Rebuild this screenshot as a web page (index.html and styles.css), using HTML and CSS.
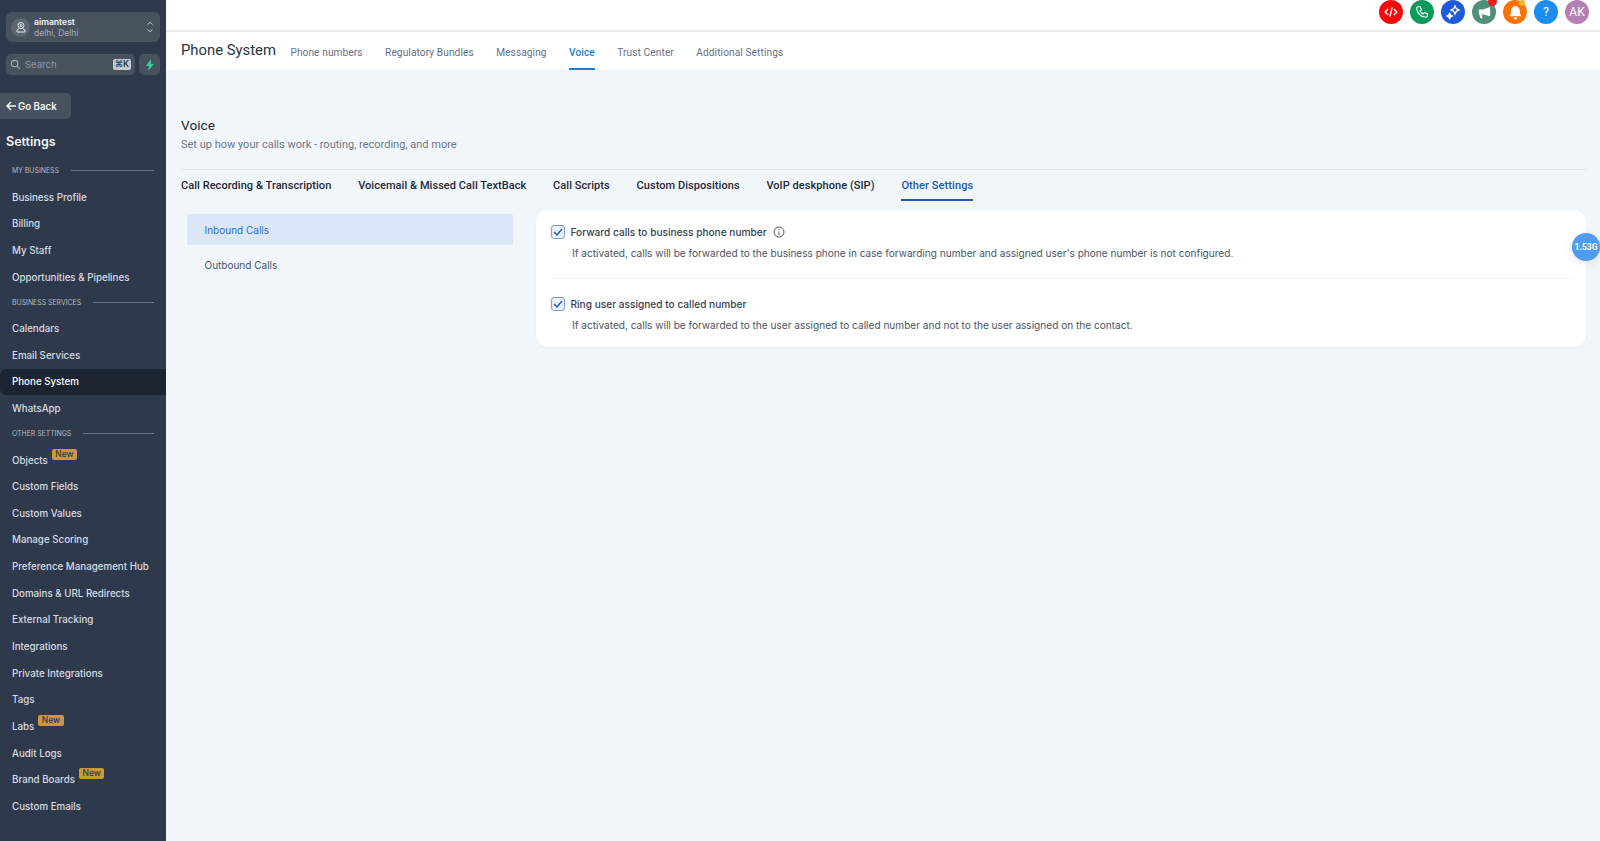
FILE: index.html
```html
<!DOCTYPE html>
<html lang="en">
<head>
    <meta charset="UTF-8">
    <meta name="viewport" content="width=device-width, initial-scale=1.0">
    <title>Phone System</title>
    <link rel="stylesheet" href="styles.css">
</head>
<body>
    <div class="layout">
        <!-- sidebar -->
        <aside class="sidebar">
            <div class="account">
                <span class="account-icon">
                    <svg width="12" height="12" viewBox="0 0 24 24" fill="none" stroke="#e5e7eb" stroke-width="2"><circle cx="12" cy="9" r="6"/><circle cx="12" cy="9" r="2"/><path d="M8 15l-4 3v4h16v-4l-4-3"/></svg>
                </span>
                <span class="account-text">
                    <span class="account-name">aimantest</span>
                    <span class="account-place">delhi, Delhi</span>
                </span>
                <svg class="account-arrows" width="8" height="16" viewBox="0 0 10 16" fill="none" stroke="#cbd5e1" stroke-width="1.2"><path d="M2 5l3-3 3 3M2 11l3 3 3-3"/></svg>
            </div>
            <div class="search-row">
                <div class="search">
                    <svg width="11" height="11" viewBox="0 0 24 24" fill="none" stroke="#a3adba" stroke-width="2.5"><circle cx="10" cy="10" r="7"/><path d="M15 15l7 7"/></svg>
                    <span class="search-text">Search</span>
                    <span class="search-key">⌘K</span>
                </div>
                <div class="bolt">
                    <svg width="10" height="12" viewBox="0 0 10 12"><path d="M6 0L1 7h3l-1 5 6-7H6z" fill="#37ca9a"/></svg>
                </div>
            </div>
            <div class="go-back">
                <svg width="10" height="10" viewBox="0 0 10 10" fill="none" stroke="#f3f4f6" stroke-width="1.5"><path d="M5 1L1 5l4 4M1 5h9"/></svg>
                <span>Go Back</span>
            </div>
            <h2 class="settings-title">Settings</h2>

            <div class="nav-label"><span>MY BUSINESS</span><i></i></div>
            <a class="nav-item">Business Profile</a>
            <a class="nav-item">Billing</a>
            <a class="nav-item">My Staff</a>
            <a class="nav-item">Opportunities &amp; Pipelines</a>

            <div class="nav-label"><span>BUSINESS SERVICES</span><i></i></div>
            <a class="nav-item">Calendars</a>
            <a class="nav-item">Email Services</a>
            <a class="nav-item active">Phone System</a>
            <a class="nav-item">WhatsApp</a>

            <div class="nav-label"><span>OTHER SETTINGS</span><i></i></div>
            <a class="nav-item">Objects<span class="new-tag">New</span></a>
            <a class="nav-item">Custom Fields</a>
            <a class="nav-item">Custom Values</a>
            <a class="nav-item">Manage Scoring</a>
            <a class="nav-item">Preference Management Hub</a>
            <a class="nav-item">Domains &amp; URL Redirects</a>
            <a class="nav-item">External Tracking</a>
            <a class="nav-item">Integrations</a>
            <a class="nav-item">Private Integrations</a>
            <a class="nav-item">Tags</a>
            <a class="nav-item">Labs<span class="new-tag">New</span></a>
            <a class="nav-item">Audit Logs</a>
            <a class="nav-item">Brand Boards<span class="new-tag">New</span></a>
            <a class="nav-item">Custom Emails</a>
        </aside>

        <div class="main">
            <!-- top icons -->
            <header class="topbar">
                <span class="circle red">
                    <svg width="14" height="14" viewBox="0 0 24 24" fill="none" stroke="#fff" stroke-width="2.4"><path d="M7 7l-5 5 5 5M17 7l5 5-5 5M14 4l-4 16"/></svg>
                </span>
                <span class="circle green">
                    <svg width="14" height="14" viewBox="0 0 24 24" fill="none" stroke="#fff" stroke-width="2"><path d="M5 3h4l2 5-2.5 2a12 12 0 0 0 5.5 5.5L16 13l5 2v4a2 2 0 0 1-2 2A16 16 0 0 1 3 5a2 2 0 0 1 2-2z"/></svg>
                </span>
                <span class="circle blue">
                    <svg width="16" height="16" viewBox="0 0 24 24" fill="none" stroke="#fff" stroke-width="2"><path d="M15 3l2 4 4 2-4 2-2 4-2-4-4-2 4-2z"/><path d="M7 14l1.5 2.5L11 18l-2.5 1.5L7 22l-1.5-2.5L3 18l2.5-1.5z" fill="#fff"/></svg>
                </span>
                <span class="circle teal">
                    <svg width="15" height="15" viewBox="0 0 24 24" fill="#fff"><path d="M21 3v15l-11-3H7.5l1.5 6H5.5L4 15H3V7h7z"/></svg>
                    <i class="dot dot-red"></i>
                </span>
                <span class="circle orange">
                    <svg width="15" height="15" viewBox="0 0 24 24" fill="#fff"><path d="M12 2a7 7 0 0 0-7 7c0 6-2 8-3 9h20c-1-1-3-3-3-9a7 7 0 0 0-7-7zM9 20a3 3 0 0 0 6 0z"/></svg>
                    <i class="dot dot-amber"></i>
                </span>
                <span class="circle sky">?</span>
                <span class="circle mauve">AK</span>
            </header>

            <!-- page tabs -->
            <nav class="subheader">
                <span class="page-title">Phone System</span>
                <a class="page-tab">Phone numbers</a>
                <a class="page-tab">Regulatory Bundles</a>
                <a class="page-tab">Messaging</a>
                <a class="page-tab current">Voice</a>
                <a class="page-tab">Trust Center</a>
                <a class="page-tab">Additional Settings</a>
            </nav>

            <section class="content">
                <h1 class="voice-title">Voice</h1>
                <p class="voice-sub">Set up how your calls work - routing, recording, and more</p>

                <div class="voice-tabs">
                    <a class="voice-tab">Call Recording &amp; Transcription</a>
                    <a class="voice-tab">Voicemail &amp; Missed Call TextBack</a>
                    <a class="voice-tab">Call Scripts</a>
                    <a class="voice-tab">Custom Dispositions</a>
                    <a class="voice-tab">VoIP deskphone (SIP)</a>
                    <a class="voice-tab current">Other Settings</a>
                </div>

                <div class="panes">
                    <div class="side-menu">
                        <a class="side-link current">Inbound Calls</a>
                        <a class="side-link">Outbound Calls</a>
                    </div>
                    <div class="card">
                        <div class="option">
                            <div class="option-head">
                                <span class="check"><svg width="10" height="8" viewBox="0 0 10 8" fill="none" stroke="#2557c7" stroke-width="1.4"><path d="M1 4l3 3 5-6"/></svg></span>
                                <span class="option-label">Forward calls to business phone number</span>
                                <svg class="info" width="12" height="12" viewBox="0 0 12 12" fill="none" stroke="#4b5563"><circle cx="6" cy="6" r="5"/><path d="M6 5.5V9M6 3v1"/></svg>
                            </div>
                            <p class="option-desc">If activated, calls will be forwarded to the business phone in case forwarding number and assigned user's phone number is not configured.</p>
                        </div>
                        <div class="option">
                            <div class="option-head">
                                <span class="check"><svg width="10" height="8" viewBox="0 0 10 8" fill="none" stroke="#2557c7" stroke-width="1.4"><path d="M1 4l3 3 5-6"/></svg></span>
                                <span class="option-label">Ring user assigned to called number</span>
                            </div>
                            <p class="option-desc">If activated, calls will be forwarded to the user assigned to called number and not to the user assigned on the contact.</p>
                        </div>
                    </div>
                </div>
            </section>
            <span class="mem-badge">1.53G</span>
        </div>
    </div>
</body>
</html>
```

FILE: styles.css
```css
* {
    box-sizing: border-box;
}

html, body {
    margin: 0;
    height: 100%;
    overflow: hidden;
}

body {
    font-family: Inter, "Liberation Sans", sans-serif;
    background-color: #f1f6fa;
}

.layout {
    display: flex;
    height: 841px;
}

/* sidebar */
.sidebar {
    width: 166px;
    flex-shrink: 0;
    background-color: #2f394c;
    color: #d7dce3;
    padding-top: 12px;
    overflow: hidden;
}

.account {
    display: flex;
    align-items: center;
    height: 30px;
    margin: 0 6px;
    padding: 0 6px 0 5px;
    background-color: #48525f;
    border-radius: 6px;
}

.account-icon {
    display: flex;
    align-items: center;
    justify-content: center;
    width: 19px;
    height: 19px;
    border-radius: 50%;
    background-color: #5d6672;
}

.account-text {
    display: flex;
    flex-direction: column;
    margin-left: 4px;
    padding-top: 2px;
    flex: 1;
}

.account-name {
    font-size: 8.6px;
    font-weight: 600;
    line-height: 11px;
    color: #f3f4f6;
}

.account-place {
    font-size: 8.5px;
    line-height: 11px;
    color: #a6adb8;
}

.search-row {
    display: flex;
    gap: 4px;
    margin: 12px 6px 0;
}

.search {
    display: flex;
    align-items: center;
    width: 129px;
    height: 21px;
    padding: 0 4px;
    background-color: #48525f;
    border-radius: 5px;
}

.search-text {
    margin-left: 4px;
    flex: 1;
    font-size: 9.5px;
    color: #8f98a5;
}

.search-key {
    padding: 0 2px;
    font-size: 8.5px;
    line-height: 11px;
    font-weight: 600;
    color: #2f394c;
    background-color: #c4c9d0;
    border-radius: 2px;
}

.bolt {
    display: flex;
    align-items: center;
    justify-content: center;
    width: 21px;
    height: 21px;
    background-color: #48525f;
    border-radius: 5px;
}

.go-back {
    display: flex;
    align-items: center;
    gap: 2px;
    width: 71px;
    height: 26px;
    margin-top: 18px;
    padding-left: 6px;
    background-color: #48525f;
    border-radius: 0 5px 5px 0;
    font-size: 9.7px;
    font-weight: 600;
    color: #f3f4f6;
    white-space: nowrap;
}

.settings-title {
    margin: 13px 0 6.9px 6px;
    font-size: 12.5px;
    line-height: 20px;
    font-weight: 600;
    color: #f3f4f6;
}

.nav-label {
    display: flex;
    align-items: center;
    gap: 12px;
    height: 26.4px;
    padding: 0 12px;
    margin-top: -1.5px;
    font-size: 6.9px;
    color: #b4bac4;
}

.nav-label i {
    flex: 1;
    height: 1px;
    background-color: #6b7688;
}

.nav-item {
    display: flex;
    align-items: center;
    height: 26.65px;
    padding-left: 12px;
    font-size: 9.75px;
    font-weight: 500;
    color: #d7dce3;
}

.nav-item.active {
    background-color: #1c2331;
    color: #fff;
    border-radius: 6px 0 0 6px;
}

.new-tag {
    align-self: flex-start;
    margin: 2px 0 0 4px;
    padding: 0 3.5px;
    font-size: 8.5px;
    line-height: 11px;
    color: #2f394c;
    background-color: #c99a33;
    border-radius: 2px;
}

/* main area */
.main {
    flex: 1;
    min-width: 0;
    position: relative;
}

.topbar {
    display: flex;
    justify-content: flex-end;
    align-items: flex-start;
    gap: 7px;
    height: 32px;
    padding-right: 11px;
    background-color: #fff;
    border-bottom: 2px solid #e8ebee;
}

.circle {
    position: relative;
    display: flex;
    align-items: center;
    justify-content: center;
    width: 24px;
    height: 24px;
    border-radius: 50%;
    font-family: Roboto, sans-serif;
    font-size: 12px;
    color: #fff;
}

.red { background-color: #f50a0a; }
.green { background-color: #0b9b59; }
.blue { background-color: #1e5bdc; }
.teal { background-color: #4f9078; }
.orange { background-color: #fa7208; }
.sky { background-color: #1d8cf0; }
.mauve { background-color: #b67fb4; }

.dot {
    position: absolute;
    top: -3px;
    right: -1px;
    border-radius: 50%;
}

.dot-red {
    width: 9px;
    height: 9px;
    background-color: #ee1c25;
}

.dot-amber {
    top: 0;
    right: 2px;
    width: 6px;
    height: 6px;
    background-color: #f5b324;
}

.subheader {
    display: flex;
    align-items: stretch;
    gap: 22.4px;
    height: 38px;
    padding-left: 15px;
    background-color: #fff;
    font-family: Roboto, sans-serif;
}

.page-title {
    margin-right: -8px;
    font-size: 14.85px;
    line-height: 37px;
    color: #2b3443;
}

.page-tab {
    font-size: 10.15px;
    line-height: 41px;
    color: #667085;
    letter-spacing: 0.1px;
}

.page-tab.current {
    color: #1d7fd8;
    font-weight: 500;
    border-bottom: 2px solid #1d7fd8;
}

.content {
    padding: 46px 14px 0 15px;
    font-family: Roboto, sans-serif;
}

.voice-title {
    margin: 0;
    font-size: 13.7px;
    line-height: 18px;
    font-weight: 400;
    color: #1f2937;
}

.voice-sub {
    margin: 3px 0 0;
    font-size: 11px;
    line-height: 16px;
    color: #6f7785;
}

.voice-tabs {
    display: flex;
    gap: 26.8px;
    margin-top: 16px;
    padding-top: 8px;
    border-top: 1px solid #e4e7ec;
}

.voice-tab {
    height: 23px;
    font-size: 11px;
    line-height: 16px;
    font-weight: 500;
    color: #1f2937;
    letter-spacing: 0.05px;
}

.voice-tab.current {
    color: #2257b5;
    letter-spacing: 0.1px;
    border-bottom: 2px solid #2257b5;
}

.panes {
    display: flex;
    gap: 23px;
    margin-top: 9px;
}

.side-menu {
    width: 326px;
    flex-shrink: 0;
    margin: 4px 0 0 6px;
    font-family: Inter, sans-serif;
}

.side-link {
    display: flex;
    align-items: center;
    height: 31px;
    padding-left: 17.5px;
    margin-bottom: 4px;
    font-size: 10px;
    color: #475467;
    border-radius: 2px;
}

.side-link.current {
    background-color: #dbe7f7;
    color: #2e6fc4;
}

.card {
    flex: 1;
    height: 137px;
    padding: 13px 15px 0;
    background-color: #fff;
    border-radius: 12px;
    font-family: Inter, sans-serif;
    box-shadow: 0 1px 3px rgba(16, 24, 40, 0.04);
}

.option {
    height: 55px;
}

.option + .option {
    padding-top: 16px;
    border-top: 1px solid #edf0f3;
    height: 60px;
}

.option-head {
    display: flex;
    align-items: center;
    height: 18px;
}

.check {
    display: flex;
    align-items: center;
    justify-content: center;
    width: 14px;
    height: 14px;
    border: 1px solid #7d9cd8;
    border-radius: 3px;
    background-color: #eaf1fb;
}

.option-label {
    margin-left: 5.5px;
    font-size: 10.15px;
    color: #374151;
    font-weight: 500;
}

.info {
    margin-left: 6px;
}

.option-desc {
    margin: 3.5px 0 0 21px;
    font-size: 10.08px;
    line-height: 16px;
    color: #4b5563;
}

.mem-badge {
    position: absolute;
    top: 233px;
    right: 0;
    width: 28px;
    height: 28px;
    border-radius: 50%;
    background-color: #4f9df0;
    color: #fff;
    font-family: Roboto, sans-serif;
    font-size: 8.5px;
    font-weight: 700;
    line-height: 28px;
    text-align: center;
    box-shadow: 0 2px 8px rgba(16, 24, 40, 0.1);
}
```
